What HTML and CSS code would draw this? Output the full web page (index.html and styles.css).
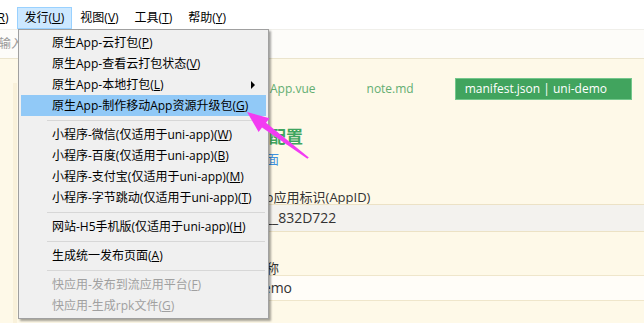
FILE: index.html
```html
<!DOCTYPE html>
<html lang="zh-CN">
<head>
<meta charset="utf-8">
<title>发行菜单</title>
<link rel="stylesheet" href="styles.css">
</head>
<body>
<div class="menubar">
  <div class="mi">运行(<u>R</u>)</div>
  <div class="mi active">发行(<u>U</u>)</div>
  <div class="mi">视图(<u>V</u>)</div>
  <div class="mi">工具(<u>T</u>)</div>
  <div class="mi">帮助(<u>Y</u>)</div>
</div>
<div class="toolbar"><span class="search">输入</span></div>
<div class="editor">
  <div class="side"></div>
  <div class="divider"></div>
  <div class="main">
    <div class="tabs">
      <div class="tab">App.vue</div>
      <div class="tab">note.md</div>
      <div class="tab current">manifest.json | uni-demo</div>
    </div>
    <div class="form">
      <h2 class="heading">基础配置</h2>
      <a class="link">配置页面</a>
      <div class="label">uni-app应用标识(AppID)</div>
      <div class="field readonly">__UNI__832D722</div>
      <div class="label second">应用名称</div>
      <div class="field">uni-demo</div>
    </div>
  </div>
</div>

<div class="dropdown">
  <div class="dd-item">原生App-云打包(<u>P</u>)</div>
  <div class="dd-item">原生App-查看云打包状态(<u>V</u>)</div>
  <div class="dd-item sub">原生App-本地打包(<u>L</u>)</div>
  <div class="dd-item hl">原生App-制作移动App资源升级包(<u>G</u>)</div>
  <div class="sep"></div>
  <div class="dd-item">小程序-微信(仅适用于uni-app)(<u>W</u>)</div>
  <div class="dd-item">小程序-百度(仅适用于uni-app)(<u>B</u>)</div>
  <div class="dd-item">小程序-支付宝(仅适用于uni-app)(<u>M</u>)</div>
  <div class="dd-item">小程序-字节跳动(仅适用于uni-app)(<u>T</u>)</div>
  <div class="sep"></div>
  <div class="dd-item">网站-H5手机版(仅适用于uni-app)(<u>H</u>)</div>
  <div class="sep"></div>
  <div class="dd-item">生成统一发布页面(<u>A</u>)</div>
  <div class="sep"></div>
  <div class="dd-item dis">快应用-发布到流应用平台(<u>F</u>)</div>
  <div class="dd-item dis">快应用-生成rpk文件(<u>G</u>)</div>
</div>

<svg class="arrow" width="644" height="323" viewBox="0 0 644 323" aria-hidden="true">
  <polygon points="247,112 269.5,118.2 266,122.8 308.8,157.4 307.4,158.8 262,127.6 258.6,132" fill="#f23cf2"/>
</svg>
</body>
</html>
```
FILE: styles.css
```css
html, body {
  margin: 0;
  padding: 0;
}
body {
  width: 644px;
  height: 323px;
  overflow: hidden;
  position: relative;
  font-family: "Open Sans", "Noto Sans CJK SC", sans-serif;
  font-size: 12px;
  color: #000;
  background: #fef9e8;
}
u {
  text-decoration: underline;
  text-underline-offset: 1px;
}

/* menubar */
.menubar {
  display: flex;
  height: 29px;
  box-sizing: border-box;
  padding-top: 7px;
  margin-left: -38px;
  background: #fff;
}
.mi {
  height: 22px;
  box-sizing: border-box;
  border: 1px solid transparent;
  padding: 0 7px;
  line-height: 20px;
  white-space: nowrap;
}
.mi.active {
  background: #cce8ff;
  border-color: #99d1ff;
}

/* toolbar strip */
.toolbar {
  height: 30px;
  box-sizing: border-box;
  background: #fdfcf9;
  border-top: 1px solid #f0efea;
  border-bottom: 1px solid #ebe4cd;
  line-height: 28px;
}
.search {
  color: #9a9a9a;
  margin-left: -1px;
}

/* editor */
.editor {
  display: flex;
  height: 264px;
}
.side {
  width: 13px;
}
.divider {
  width: 4px;
  margin-top: 24px;
  background: #f9f1da;
}
.main {
  flex: 1;
  min-width: 0;
}
.tabs {
  display: flex;
  gap: 31px;
  margin-top: 19px;
  height: 22px;
  padding-left: 243px;
}
.tab {
  padding: 0 10px;
  height: 22px;
  box-sizing: border-box;
  line-height: 22px;
  color: #62ae72;
  white-space: nowrap;
}
.tab.current {
  background: #41a45e;
  border: 1px solid #74c78c;
  line-height: 20px;
  padding: 0 24px 0 9px;
  color: #fff;
}

.form {
  display: flex;
  flex-direction: column;
  padding-left: 205px;
}
.heading {
  margin: 27px 0 0 13px;
  font-size: 17px;
  line-height: 20px;
  font-weight: bold;
  color: #3fa55f;
}
.link {
  margin: 4px 0 0 5px;
  line-height: 16px;
  font-size: 13px;
  color: #3d92e0;
}
.label {
  margin-top: 23px;
  padding-left: 5px;
  font-size: 13px;
  line-height: 14px;
  color: #333;
  white-space: nowrap;
}
.label.second {
  margin-top: 29px;
}
.field {
  height: 26px;
  box-sizing: border-box;
  border-top: 1px solid #efe6cb;
  border-bottom: 1px solid #efe6cb;
  background: #fffdf8;
  padding-left: 7px;
  font-size: 14px;
  line-height: 24px;
  color: #333;
  white-space: nowrap;
}
.field.readonly {
  height: 28px;
  line-height: 26px;
  background: #f3f2ee;
  border-color: #ece2c5;
}

/* dropdown menu */
.dropdown {
  position: absolute;
  left: 18px;
  top: 29px;
  width: 251px;
  box-sizing: border-box;
  padding: 2px;
  background: #f0f0f0;
  border: 1px solid #a0a0a0;
  box-shadow: 2px 2px 2px rgba(0, 0, 0, 0.35);
}
.dd-item {
  position: relative;
  height: 21px;
  line-height: 21px;
  padding-left: 31px;
  white-space: nowrap;
}
.dd-item.hl {
  background: #91c9f7;
}
.dd-item.dis {
  color: #a0a0a0;
}
.dd-item.sub::after {
  content: "";
  position: absolute;
  right: 11px;
  top: 7px;
  border-left: 4px solid #000;
  border-top: 4px solid transparent;
  border-bottom: 4px solid transparent;
}
.sep {
  height: 1px;
  background: #d7d7d7;
  margin: 4px 1px 3px 26px;
}

.arrow {
  position: absolute;
  left: 0;
  top: 0;
  pointer-events: none;
}
```
